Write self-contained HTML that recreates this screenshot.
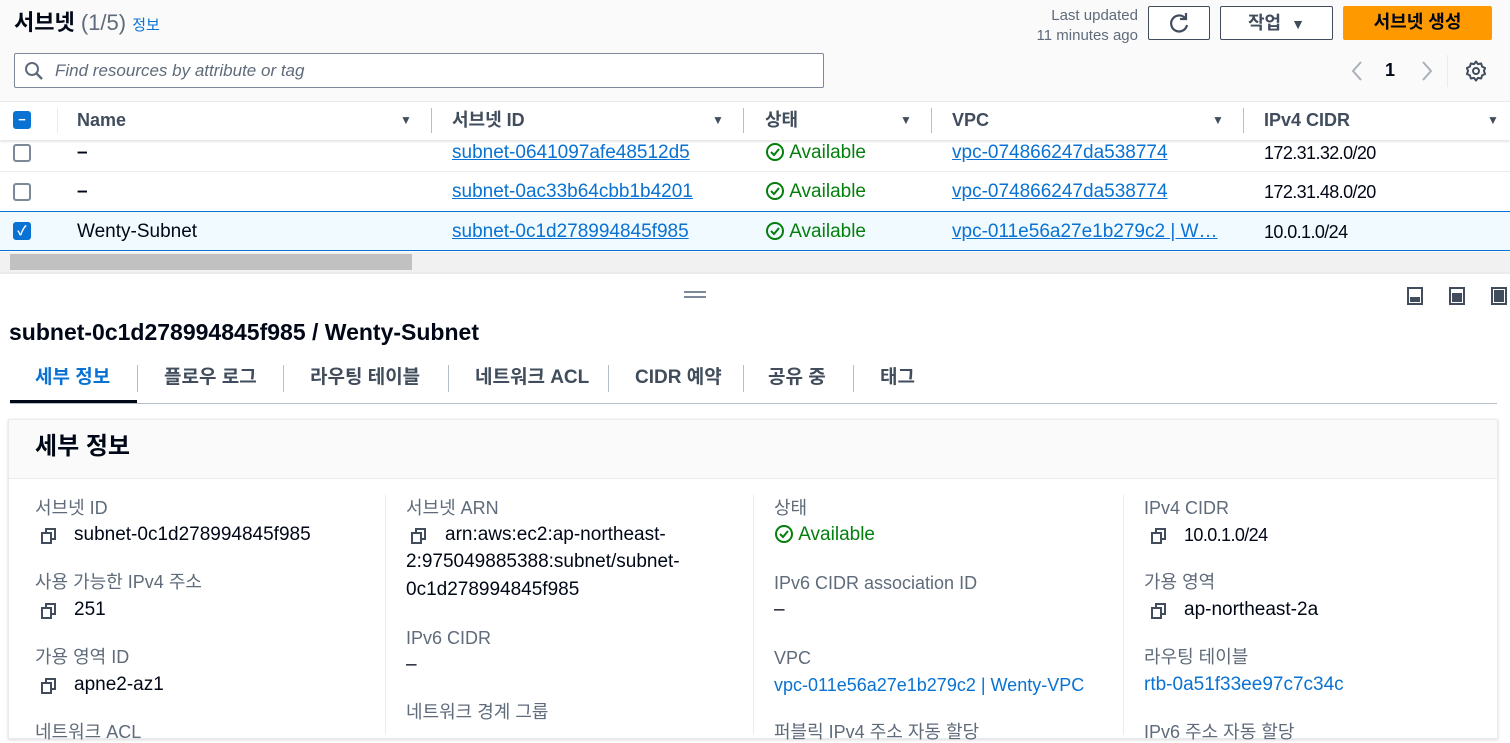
<!DOCTYPE html>
<html><head><meta charset="utf-8"><style>
*{box-sizing:border-box;margin:0;padding:0}
body{width:1510px;height:733px;overflow:hidden;background:#fff;font-family:"Liberation Sans","Noto Sans CJK KR",sans-serif;color:#000716;font-size:19px;position:relative}
.a{position:absolute;white-space:nowrap;line-height:22px}
.lk{color:#0972d3;text-decoration:underline}
.lb{color:#5f6b7a;font-size:18px}
.av{color:#037f0c}
.cb{width:18px;height:18px;border:2px solid #7d8998;border-radius:3px;background:#fff}
.cbf{background:#0972d3;border-color:#0972d3;color:#fff;font-size:13px;text-align:center;line-height:14px;font-weight:bold}
.sep{width:1px;background:#b6bec9}
.tri{font-size:12px;color:#414d5c}
.th{font-weight:bold;color:#414d5c;font-size:18px}
.tab{font-weight:bold;font-size:19px;color:#414d5c}
.ci{font-size:18px;letter-spacing:-0.6px}
</style></head><body>
<svg width="0" height="0" style="position:absolute"><defs>
<symbol id="cp" viewBox="0 0 18 18"><rect x="2" y="6" width="9" height="10" fill="none" stroke="#414d5c" stroke-width="2"/><path d="M6 6V2h9v10h-4" fill="none" stroke="#414d5c" stroke-width="2"/></symbol>
<symbol id="ok" viewBox="0 0 20 20"><circle cx="10" cy="10" r="8" fill="none" stroke="#037f0c" stroke-width="2"/><path d="M6 10l3 3 5-6" fill="none" stroke="#037f0c" stroke-width="2"/></symbol>
</defs></svg>
<div class="a" style="left:0;top:0;width:1510px;height:101px;background:#fafafa"></div>
<div class="a" style="left:14px;top:10px;font-size:22px;font-weight:bold;line-height:26px">서브넷 <span style="font-weight:normal;color:#5f6b7a">(1/5)</span> <span style="font-size:15px;color:#0972d3;font-weight:normal">정보</span></div>
<div class="a" style="left:1000px;top:6px;width:138px;text-align:right;font-size:15px;color:#5f6b7a;line-height:20px">Last updated<br>11 minutes ago</div>
<div class="a" style="left:1148px;top:6px;width:62px;height:34px;border:1px solid #414d5c;border-radius:2px;background:#fff"></div>
<svg class="a" style="left:1168px;top:12px" width="22" height="22"><path d="M17 6A8 8 0 1 0 19 13" fill="none" stroke="#414d5c" stroke-width="2.2"/><path d="M18 1v6h-6" fill="none" stroke="#414d5c" stroke-width="2.2"/></svg>
<div class="a" style="left:1220px;top:6px;width:113px;height:34px;border:1px solid #414d5c;border-radius:2px;background:#fff;text-align:center;font-size:18px;line-height:32px;font-weight:bold;color:#414d5c">작업 &nbsp;<span style="font-size:14px">▼</span></div>
<div class="a" style="left:1343px;top:6px;width:149px;height:34px;background:#ff9900;border-radius:2px;text-align:center;font-size:18px;line-height:32px;font-weight:bold">서브넷 생성</div>
<div class="a" style="left:14px;top:53px;width:810px;height:35px;border:1px solid #7d8998;border-radius:2px;background:#fff"></div>
<svg class="a" style="left:24px;top:61px" width="20" height="20"><circle cx="8" cy="8" r="6" fill="none" stroke="#5f6b7a" stroke-width="2"/><line x1="12.5" y1="12.5" x2="18" y2="18" stroke="#5f6b7a" stroke-width="2.5"/></svg>
<div class="a" style="left:55px;top:60px;font-style:italic;color:#5f6b7a;font-size:17px">Find resources by attribute or tag</div>
<svg class="a" style="left:1350px;top:60px" width="14" height="22"><path d="M11 2L3 11l8 9" fill="none" stroke="#aab0b8" stroke-width="2"/></svg>
<div class="a" style="left:1385px;top:59px;font-weight:bold;font-size:18px">1</div>
<svg class="a" style="left:1420px;top:60px" width="14" height="22"><path d="M3 2l8 9-8 9" fill="none" stroke="#aab0b8" stroke-width="2"/></svg>
<div class="a sep" style="left:1447px;top:55px;height:32px;background:#e9ebed"></div>
<svg class="a" style="left:1464px;top:59px" width="24" height="24" viewBox="0 0 24 24"><circle cx="12" cy="12" r="3" fill="none" stroke="#414d5c" stroke-width="2"/><path d="M12 2.5l2 2.6 3.2-.6.9 3.1 3 1.4-1.2 3 1.2 3-3 1.4-.9 3.1-3.2-.6-2 2.6-2-2.6-3.2.6-.9-3.1-3-1.4 1.2-3-1.2-3 3-1.4.9-3.1 3.2.6z" fill="none" stroke="#414d5c" stroke-width="2" stroke-linejoin="round"/></svg>
<div class="a" style="left:0;top:101px;width:1510px;height:39px;background:#fff;border-top:1px solid #e9ebed;box-shadow:0 2px 2px rgba(0,0,0,.1)"></div>
<div class="a cb cbf" style="left:13px;top:111px">−</div>
<div class="a sep" style="left:57px;top:108px;height:25px;background:#e9ebed"></div>
<div class="a th" style="left:77px;top:109px">Name</div>
<div class="a tri" style="left:400px;top:109px">▼</div>
<div class="a sep" style="left:431px;top:108px;height:25px"></div>
<div class="a th" style="left:452px;top:109px">서브넷 ID</div>
<div class="a tri" style="left:712px;top:109px">▼</div>
<div class="a sep" style="left:743px;top:108px;height:25px"></div>
<div class="a th" style="left:765px;top:109px">상태</div>
<div class="a tri" style="left:900px;top:109px">▼</div>
<div class="a sep" style="left:931px;top:108px;height:25px"></div>
<div class="a th" style="left:952px;top:109px">VPC</div>
<div class="a tri" style="left:1212px;top:109px">▼</div>
<div class="a sep" style="left:1243px;top:108px;height:25px"></div>
<div class="a th" style="left:1264px;top:109px">IPv4 CIDR</div>
<div class="a tri" style="left:1487px;top:109px">▼</div>
<div class="a" style="left:0;top:171px;width:1510px;height:1px;background:#e9ebed"></div>
<div class="a" style="left:0;top:211px;width:1510px;height:40px;background:#f1faff;border-top:1px solid #0972d3;border-bottom:1px solid #0972d3"></div>
<div class="a cb" style="left:13px;top:144px"></div>
<div class="a" style="left:77px;top:142px;font-weight:bold">–</div>
<div class="a lk" style="left:452px;top:142px">subnet-0641097afe48512d5</div>
<div class="a cb" style="left:13px;top:183px"></div>
<div class="a" style="left:77px;top:181px;font-weight:bold">–</div>
<div class="a lk" style="left:452px;top:181px">subnet-0ac33b64cbb1b4201</div>
<div class="a cb cbf" style="left:13px;top:222px">✓</div>
<div class="a" style="left:77px;top:221px">Wenty-Subnet</div>
<div class="a lk" style="left:452px;top:221px">subnet-0c1d278994845f985</div>
<div class="a lk" style="left:952px;top:142px">vpc-074866247da538774</div>
<div class="a lk" style="left:952px;top:181px">vpc-074866247da538774</div>
<div class="a lk" style="left:952px;top:221px">vpc-011e56a27e1b279c2 | W…</div>
<div class="a ci" style="left:1264px;top:142px">172.31.32.0/20</div>
<div class="a ci" style="left:1264px;top:181px">172.31.48.0/20</div>
<div class="a ci" style="left:1264px;top:221px">10.0.1.0/24</div>
<div class="a av" style="left:765px;top:142px"><svg width="20" height="20" style="vertical-align:-4px"><use href="#ok"/></svg> Available</div>
<div class="a av" style="left:765px;top:181px"><svg width="20" height="20" style="vertical-align:-4px"><use href="#ok"/></svg> Available</div>
<div class="a av" style="left:765px;top:221px"><svg width="20" height="20" style="vertical-align:-4px"><use href="#ok"/></svg> Available</div>
<div class="a" style="left:0;top:252px;width:1510px;height:20px;background:#f1f1f1"></div>
<div class="a" style="left:10px;top:254px;width:402px;height:16px;background:#c1c1c1"></div>
<div class="a" style="left:0;top:272px;width:1510px;height:2px;background:#e9ebed"></div>
<div class="a" style="left:684px;top:291px;width:22px;height:2px;background:#7d8998"></div>
<div class="a" style="left:684px;top:296px;width:22px;height:2px;background:#7d8998"></div>
<svg class="a" style="left:1406px;top:286px" width="104" height="20"><rect x="2" y="2" width="14" height="16" fill="none" stroke="#414d5c" stroke-width="2"/><rect x="4" y="11" width="10" height="5" fill="#414d5c"/><rect x="44" y="2" width="14" height="16" fill="none" stroke="#414d5c" stroke-width="2"/><rect x="46" y="7" width="10" height="9" fill="#414d5c"/><rect x="86" y="2" width="14" height="16" fill="none" stroke="#414d5c" stroke-width="2"/><rect x="88" y="4" width="10" height="12" fill="#414d5c"/></svg>
<div class="a" style="left:9px;top:319px;font-size:23px;font-weight:bold;line-height:26px">subnet-0c1d278994845f985 / Wenty-Subnet</div>
<div class="a" style="left:10px;top:403px;width:1487px;height:1px;background:#b6bec9"></div>
<div class="a" style="left:10px;top:400px;width:127px;height:3px;background:#000716"></div>
<div class="a tab" style="left:35px;top:367px;color:#0972d3">세부 정보</div>
<div class="a sep" style="left:137px;top:365px;height:27px"></div>
<div class="a tab" style="left:164px;top:367px">플로우 로그</div>
<div class="a sep" style="left:283px;top:365px;height:27px"></div>
<div class="a tab" style="left:310px;top:367px">라우팅 테이블</div>
<div class="a sep" style="left:448px;top:365px;height:27px"></div>
<div class="a tab" style="left:475px;top:367px">네트워크 ACL</div>
<div class="a sep" style="left:608px;top:365px;height:27px"></div>
<div class="a tab" style="left:635px;top:367px">CIDR 예약</div>
<div class="a sep" style="left:743px;top:365px;height:27px"></div>
<div class="a tab" style="left:768px;top:367px">공유 중</div>
<div class="a sep" style="left:853px;top:365px;height:27px"></div>
<div class="a tab" style="left:880px;top:367px">태그</div>
<div class="a" style="left:8px;top:419px;width:1490px;height:320px;border:1px solid #e9ebed;box-shadow:0 1px 3px rgba(0,0,0,.15);background:#fff"></div>
<div class="a" style="left:9px;top:420px;width:1488px;height:59px;background:#fafafa;border-bottom:1px solid #e9ebed"></div>
<div class="a" style="left:35px;top:432px;font-size:24px;font-weight:bold;line-height:30px">세부 정보</div>
<div class="a" style="left:385px;top:495px;width:1px;height:240px;background:#e9ebed"></div>
<div class="a" style="left:753px;top:495px;width:1px;height:240px;background:#e9ebed"></div>
<div class="a" style="left:1123px;top:495px;width:1px;height:240px;background:#e9ebed"></div>
<div class="a lb" style="left:35px;top:497px">서브넷 ID</div>
<svg class="a" style="left:40px;top:527px" width="18" height="18"><use href="#cp"/></svg><div class="a" style="left:74px;top:524px">subnet-0c1d278994845f985</div>
<div class="a lb" style="left:35px;top:571px">사용 가능한 IPv4 주소</div>
<svg class="a" style="left:40px;top:602px" width="18" height="18"><use href="#cp"/></svg><div class="a" style="left:74px;top:599px">251</div>
<div class="a lb" style="left:35px;top:646px">가용 영역 ID</div>
<svg class="a" style="left:40px;top:677px" width="18" height="18"><use href="#cp"/></svg><div class="a" style="left:74px;top:674px">apne2-az1</div>
<div class="a lb" style="left:35px;top:721px">네트워크 ACL</div>
<div class="a lb" style="left:406px;top:497px">서브넷 ARN</div>
<svg class="a" style="left:410px;top:527px" width="18" height="18"><use href="#cp"/></svg><div class="a" style="left:445px;top:524px">arn:aws:ec2:ap-northeast-</div>
<div class="a" style="left:406px;top:551px">2:975049885388:subnet/subnet-</div>
<div class="a" style="left:406px;top:579px">0c1d278994845f985</div>
<div class="a lb" style="left:406px;top:627px">IPv6 CIDR</div>
<div class="a" style="left:406px;top:654px">–</div>
<div class="a lb" style="left:406px;top:701px">네트워크 경계 그룹</div>
<div class="a lb" style="left:774px;top:497px">상태</div>
<div class="a av" style="left:774px;top:524px"><svg width="20" height="20" style="vertical-align:-4px"><use href="#ok"/></svg> Available</div>
<div class="a lb" style="left:774px;top:572px">IPv6 CIDR association ID</div>
<div class="a" style="left:774px;top:599px">–</div>
<div class="a lb" style="left:774px;top:647px">VPC</div>
<div class="a" style="left:774px;top:674px;color:#0972d3;font-size:18px">vpc-011e56a27e1b279c2 | Wenty-VPC</div>
<div class="a lb" style="left:774px;top:721px">퍼블릭 IPv4 주소 자동 할당</div>
<div class="a lb" style="left:1144px;top:497px">IPv4 CIDR</div>
<svg class="a" style="left:1150px;top:527px" width="18" height="18"><use href="#cp"/></svg><div class="a ci" style="left:1184px;top:524px">10.0.1.0/24</div>
<div class="a lb" style="left:1144px;top:571px">가용 영역</div>
<svg class="a" style="left:1150px;top:602px" width="18" height="18"><use href="#cp"/></svg><div class="a" style="left:1184px;top:599px">ap-northeast-2a</div>
<div class="a lb" style="left:1144px;top:646px">라우팅 테이블</div>
<div class="a" style="left:1144px;top:674px;color:#0972d3">rtb-0a51f33ee97c7c34c</div>
<div class="a lb" style="left:1144px;top:721px">IPv6 주소 자동 할당</div>
</body></html>
